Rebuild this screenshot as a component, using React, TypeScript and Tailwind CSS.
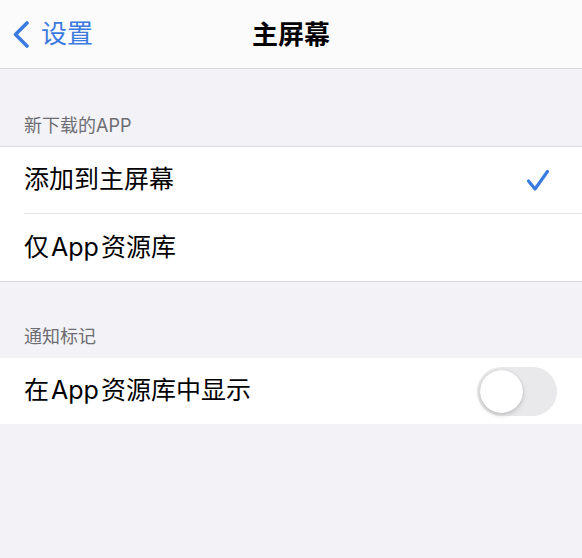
import { useState } from "react";

const font = { fontFamily: '"Inter", "Noto Sans CJK SC", sans-serif' };

function Chevron() {
  return (
    <svg width="18" height="27" viewBox="0 0 18 27" fill="none">
      <path
        d="M15 2 L3.5 13.5 L15 25"
        stroke="#3b7be0"
        strokeWidth="3.6"
        strokeLinecap="round"
        strokeLinejoin="round"
      />
    </svg>
  );
}

function Check() {
  return (
    <svg width="24" height="23" viewBox="0 0 24 23" fill="none">
      <path
        d="M2.5 12 L9 20 L21.5 2.5"
        stroke="#3b7be0"
        strokeWidth="3.2"
        strokeLinecap="round"
        strokeLinejoin="round"
      />
    </svg>
  );
}

function Toggle({ on, onChange }: { on: boolean; onChange: () => void }) {
  return (
    <button
      type="button"
      onClick={onChange}
      className={`flex h-[49px] w-[80px] items-center rounded-full p-[3px] ${
        on ? "justify-end bg-[#34c759]" : "justify-start bg-[#e9e9eb]"
      }`}
    >
      <span className="h-[43px] w-[43px] rounded-full bg-white shadow-[0_2px_5px_rgba(0,0,0,0.18),0_0_1px_rgba(0,0,0,0.2)]" />
    </button>
  );
}

// latin word inside CJK text gets a little breathing room, like the system does
function App_() {
  return <span className="mx-[2px]">App</span>;
}

export default function App() {
  const [choice, setChoice] = useState<"home" | "library">("home");
  const [badges, setBadges] = useState(false);

  return (
    <div className="min-h-[558px] w-full bg-[#f2f2f7] antialiased" style={font}>
      {/* nav bar */}
      <div className="grid h-[69px] grid-cols-[1fr_auto_1fr] items-center border-b border-[#d9d9dd] bg-[#fbfbfc]">
        <button type="button" className="flex items-center gap-[11px] pl-[12px] text-[26px] text-[#3b7be0]">
          <Chevron />
          <span className="leading-none">设置</span>
        </button>
        <h1 className="pt-[1px] text-[26px] font-semibold leading-none text-black">主屏幕</h1>
        <div />
      </div>

      {/* 新下载的APP */}
      <div className="px-[24px] pb-[9px] pt-[45px] text-[18px] leading-[23px] text-[#6d6d72]">新下载的APP</div>
      <div className="border-y border-[#d9d9dd] bg-white">
        <button
          type="button"
          onClick={() => setChoice("home")}
          className="flex h-[66px] w-full items-center justify-between pl-[24px] pr-[32px] text-left"
        >
          <span className="text-[25px] text-black">添加到主屏幕</span>
          {choice === "home" && <Check />}
        </button>
        <div className="ml-[24px] h-px bg-[#e4e4e7]" />
        <button
          type="button"
          onClick={() => setChoice("library")}
          className="flex h-[67px] w-full items-center justify-between pl-[24px] pr-[32px] text-left"
        >
          <span className="text-[25px] text-black">
            仅<App_ />资源库
          </span>
          {choice === "library" && <Check />}
        </button>
      </div>

      {/* 通知标记 */}
      <div className="px-[24px] pb-[10px] pt-[44px] text-[18px] leading-[22px] text-[#6d6d72]">通知标记</div>
      <div className="flex h-[66px] items-center justify-between bg-white pl-[24px] pr-[25px]">
        <span className="text-[25px] text-black">
          在<App_ />资源库中显示
        </span>
        <Toggle on={badges} onChange={() => setBadges(!badges)} />
      </div>
    </div>
  );
}
